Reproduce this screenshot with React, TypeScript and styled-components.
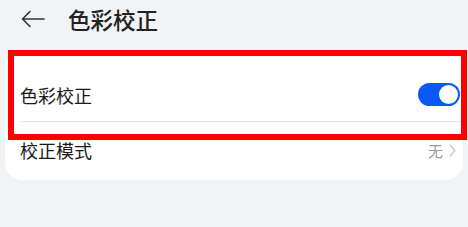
import React from "react";
import styled, { createGlobalStyle } from "styled-components";

const Global = createGlobalStyle`
  html, body { margin: 0; padding: 0; background: #f1f3f5; }
  body { font-family: "Noto Sans CJK SC", "Noto Sans", sans-serif; }
`;

const Page = styled.div`
  width: 468px;
  height: 227px;
  background: #f1f3f5;
  display: flex;
  flex-direction: column;
  overflow: hidden;
`;

const Header = styled.div`
  height: 38px;
  display: flex;
  align-items: center;
  padding-left: 21px;
  gap: 23px;
`;

const Title = styled.div`
  font-size: 22.5px;
  color: #222222;
  line-height: 1;
  font-weight: 500;
  padding-top: 1px;
`;

const Card = styled.div`
  margin: 12px 5px 0 5px;
  background: #ffffff;
  border-radius: 18px;
  padding: 18px 0 2px 15px;
  position: relative;
`;

const Row = styled.div<{ $h: number }>`
  height: ${(p) => p.$h}px;
  display: flex;
  align-items: center;
  justify-content: space-between;
  padding-right: 3px;
`;

const Label = styled.div`
  font-size: 18px;
  color: #1a1a1a;
  line-height: 1;
`;

const Divider = styled.div`
  height: 1px;
  background: #e6e7e9;
`;

const Toggle = styled.div`
  width: 42px;
  height: 23px;
  border-radius: 12px;
  background: #0a59f7;
  display: flex;
  align-items: center;
  justify-content: flex-end;
  padding: 0 2px;
  box-sizing: border-box;
`;

const Knob = styled.div`
  width: 19px;
  height: 19px;
  border-radius: 50%;
  background: #fff;
`;

const Value = styled.div`
  display: flex;
  align-items: center;
  gap: 6px;
  font-size: 15px;
  color: #9a9a9a;
  margin-right: 4px;
`;

const Highlight = styled.div`
  position: absolute;
  left: 3px;
  top: 0px;
  width: 459px;
  height: 90px;
  border: 6px solid #ff0000;
  box-sizing: border-box;
  pointer-events: none;
`;

export default function App() {
  return (
    <>
      <Global />
      <Page>
        <Header>
          <svg width="24" height="18" viewBox="0 0 24 18" fill="none">
            <path d="M9 1.5 L1.5 9 L9 16.5 M1.5 9 H23" stroke="#333" strokeWidth="1.6" strokeLinecap="round" strokeLinejoin="round" />
          </svg>
          <Title>色彩校正</Title>
        </Header>
        <Card>
          <Row $h={53}>
            <Label>色彩校正</Label>
            <Toggle>
              <Knob />
            </Toggle>
          </Row>
          <Divider />
          <Row $h={56}>
            <Label>校正模式</Label>
            <Value>
              <span>无</span>
              <svg width="7" height="13" viewBox="0 0 7 13" fill="none">
                <path d="M1 1 L6 6.5 L1 12" stroke="#c8c8c8" strokeWidth="1.3" strokeLinecap="round" strokeLinejoin="round" />
              </svg>
            </Value>
          </Row>
          <Highlight />
        </Card>
      </Page>
    </>
  );
}
